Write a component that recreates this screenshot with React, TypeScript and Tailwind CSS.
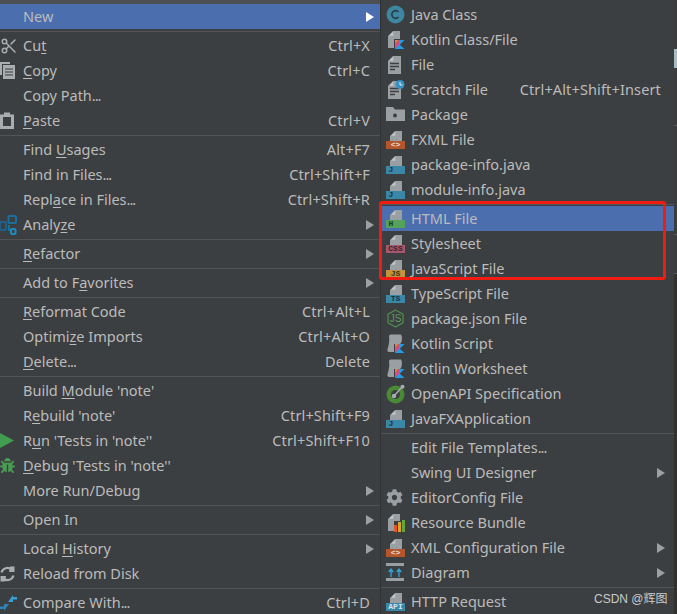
import type { ReactNode } from "react"
import { FaBug, FaCog } from "react-icons/fa"
import { Scissors } from "lucide-react"

type MenuEntry = {
  label: string
  shortcut?: string
  arrow?: boolean
  active?: boolean
  icon?: ReactNode
}

const PAGE = "#9a9fa3"

function Page() {
  return (
    <>
      <path d="M4 6 L9 1 H16 V11 H4 Z" fill={PAGE} />
      <path d="M5 5.8 L9.3 1.5 V5.8 Z" fill="#c3c6c8" />
    </>
  )
}

function BadgeIcon({ color, label, ink }: { color: string; label: string; ink: string }) {
  return (
    <svg width="19" height="19" viewBox="0 0 19 19">
      <Page />
      <rect x="0" y="11" width="19" height="8" fill={color} />
      <text
        x={label.length > 1 ? 9.5 : 5}
        y="17.2"
        textAnchor="middle"
        fontSize="8"
        fontWeight="700"
        fontFamily="Liberation Mono, monospace"
        fill={ink}
      >
        {label}
      </text>
    </svg>
  )
}

function KotlinMark() {
  return (
    <>
      <path d="M13 10 H18.5 L13 15.5 Z" fill="#1e9fe6" />
      <path d="M9 10 H13 L9 14.5 Z" fill="#ef7d3a" />
      <path d="M9 14.5 L13 10 L14 14.5 L9 19 Z" fill="#d64d87" />
      <path d="M9 19 L13.5 14.5 L18.5 19 Z" fill="#1e9fe6" />
    </>
  )
}

function KotlinFile({ blob }: { blob?: boolean }) {
  return (
    <svg width="19" height="19" viewBox="0 0 19 19">
      {blob ? (
        <path d="M3 2 Q3 0.5 5 0.5 H15 Q17 4 15 9 L14 10 H8 V18 H3 Q1 18 1.5 15 Q4 8 3 2 Z" fill={PAGE} />
      ) : (
        <>
          <path d="M2 6 L7 1 H14 V9 H8 V18 H2 Z" fill={PAGE} />
          <path d="M3 5.8 L7.3 1.5 V5.8 Z" fill="#c3c6c8" />
        </>
      )}
      <KotlinMark />
    </svg>
  )
}

function TextFile({ clock }: { clock?: boolean }) {
  return (
    <svg width="19" height="19" viewBox="0 0 19 19">
      <path d="M2 6 L7 1 H15 V19 H2 Z" fill={PAGE} />
      <path d="M3 5.8 L7.3 1.5 V5.8 Z" fill="#c3c6c8" />
      <path d="M4 8.5 H13 M4 11.5 H13 M4 14.5 H9" stroke="#3c3f41" strokeWidth="1.3" />
      {clock && (
        <>
          <circle cx="14" cy="4.5" r="4.5" fill="#3592c4" />
          <path d="M14 2 V5 H16.5" stroke="#e6f0f5" strokeWidth="1" fill="none" />
        </>
      )}
    </svg>
  )
}

function JavaClass() {
  return (
    <svg width="19" height="19" viewBox="0 0 19 19">
      <circle cx="9.5" cy="9.5" r="9" fill="#3d87a3" />
      <path d="M12.5 7 A3.8 3.8 0 1 0 12.5 12" stroke="#2b3d45" strokeWidth="1.7" fill="none" />
    </svg>
  )
}

function PackageIcon() {
  return (
    <svg width="19" height="19" viewBox="0 0 19 19">
      <path d="M0 2 H7 L9 4.5 H19 V16 H0 Z" fill={PAGE} />
      <circle cx="9" cy="10.5" r="2" fill="#3c3f41" />
    </svg>
  )
}

function PackageJson() {
  return (
    <svg width="19" height="19" viewBox="0 0 19 19">
      <path d="M9.5 1 L17 5.2 V13.8 L9.5 18 L2 13.8 V5.2 Z" fill="none" stroke="#4f8a4f" strokeWidth="1.3" />
      <text x="9.5" y="13" textAnchor="middle" fontSize="10" fontFamily="Liberation Sans, sans-serif" fill="#5f9a5f">
        JS
      </text>
    </svg>
  )
}

function OpenApi() {
  return (
    <svg width="20" height="20" viewBox="0 0 20 20">
      <circle cx="9.5" cy="10.5" r="9" fill="#4b8a35" />
      <circle cx="9.5" cy="10.5" r="4.5" fill="#3c3f41" />
      <path d="M8 12 L16 3" stroke="#a9adb0" strokeWidth="1.4" />
      <circle cx="8" cy="12" r="2.2" fill="#a9adb0" />
      <circle cx="16.5" cy="2.8" r="2" fill="#a9adb0" />
    </svg>
  )
}

function ResourceBundle() {
  return (
    <svg width="19" height="19" viewBox="0 0 19 19">
      <path d="M2 6 L7 1 H14 V8 H8 V18 H2 Z" fill={PAGE} />
      <path d="M3 5.8 L7.3 1.5 V5.8 Z" fill="#c3c6c8" />
      <rect x="8" y="12" width="3" height="7" fill="#e0562a" />
      <rect x="12" y="9" width="3" height="10" fill="#e0a32a" />
      <rect x="16" y="7" width="3" height="12" fill="#62a73b" />
    </svg>
  )
}

function DiagramIcon() {
  return (
    <svg width="19" height="19" viewBox="0 0 19 19">
      <rect x="0" y="0" width="18" height="3" fill={PAGE} />
      <rect x="0" y="15" width="18" height="3" fill={PAGE} />
      <path d="M5 14 V7 M2.8 9 L5 6 L7.2 9 M13 14 V7 M10.8 9 L13 6 L15.2 9" stroke="#35a6d8" strokeWidth="1.3" fill="none" />
    </svg>
  )
}

function CopyIcon() {
  return (
    <svg width="15" height="17" viewBox="0 0 15 17">
      <path d="M0 0 H10 V2 H2 V13 H0 Z" fill="#a9adb0" />
      <rect x="3" y="3" width="12" height="14" fill="#a9adb0" />
      <path d="M5 7 H13 M5 10 H13 M5 13 H13" stroke="#3c3f41" strokeWidth="1.2" />
    </svg>
  )
}

function PasteIcon() {
  return (
    <svg width="14" height="17" viewBox="0 0 14 17">
      <path d="M0 2.5 H4 V0.5 H10 V2.5 H14 V17 H0 Z" fill="#a9adb0" />
      <rect x="3" y="5" width="8" height="9" fill="#3c3f41" />
    </svg>
  )
}

function AnalyzeIcon() {
  return (
    <svg width="17" height="20" viewBox="0 0 17 20">
      <rect x="8.5" y="1" width="7.5" height="7" rx="1" fill="none" stroke="#1b6f9e" strokeWidth="2" />
      <rect x="0" y="7" width="6" height="8" rx="1" fill="none" stroke="#1f5f88" strokeWidth="2" />
      <rect x="8" y="10" width="2" height="6" fill="#1b6f9e" />
      <rect x="11" y="14" width="4.5" height="5" rx="1" fill="none" stroke="#1b8cc0" strokeWidth="2" />
    </svg>
  )
}

function RunIcon() {
  return (
    <svg width="14" height="15" viewBox="0 0 14 15">
      <path d="M0 0 L14 7.5 L0 15 Z" fill="#3f9e50" />
    </svg>
  )
}

function ReloadIcon() {
  return (
    <svg width="15" height="16" viewBox="0 0 15 16">
      <path d="M1.5 6.5 A6.2 6.2 0 0 1 12.5 4.5" stroke="#a9adb0" strokeWidth="2.2" fill="none" />
      <path d="M10 0.5 H14.5 V6 H9 Z" fill="#a9adb0" />
      <path d="M13.5 9.5 A6.2 6.2 0 0 1 2.5 11.5" stroke="#a9adb0" strokeWidth="2.2" fill="none" />
      <path d="M5 15.5 H0.5 V10 H6 Z" fill="#a9adb0" />
    </svg>
  )
}

function CompareIcon() {
  return (
    <svg width="17" height="18" viewBox="0 0 17 18">
      <path d="M8 8 L13 1 V8 Z" fill="#389fd6" />
      <rect x="13" y="3" width="4" height="2.5" fill="#389fd6" />
      <path d="M9 10 L4 17 V10 Z" fill="#2f84b5" />
      <rect x="0" y="12.5" width="4" height="2.5" fill="#2f84b5" />
    </svg>
  )
}

const leftSections: MenuEntry[][] = [
  [{ label: "New", arrow: true, active: true }],
  [
    { label: "Cu&t", shortcut: "Ctrl+X", icon: <Scissors size={18} strokeWidth={2} color="#a9adb0" className="rotate-180 -scale-x-100" /> },
    { label: "&Copy", shortcut: "Ctrl+C", icon: <CopyIcon /> },
    { label: "Copy Path..." },
    { label: "&Paste", shortcut: "Ctrl+V", icon: <PasteIcon /> },
  ],
  [
    { label: "Find &Usages", shortcut: "Alt+F7" },
    { label: "Find in Files...", shortcut: "Ctrl+Shift+F" },
    { label: "Repl&ace in Files...", shortcut: "Ctrl+Shift+R" },
    { label: "Analy&ze", arrow: true, icon: <AnalyzeIcon /> },
  ],
  [{ label: "&Refactor", arrow: true }],
  [{ label: "Add to F&avorites", arrow: true }],
  [
    { label: "&Reformat Code", shortcut: "Ctrl+Alt+L" },
    { label: "Optimi&ze Imports", shortcut: "Ctrl+Alt+O" },
    { label: "&Delete...", shortcut: "Delete" },
  ],
  [
    { label: "Build &Module 'note'" },
    { label: "R&ebuild 'note'", shortcut: "Ctrl+Shift+F9" },
    { label: "R&un 'Tests in 'note''", shortcut: "Ctrl+Shift+F10", icon: <RunIcon /> },
    { label: "&Debug 'Tests in 'note''", icon: <FaBug size={15} color="#499c54" /> },
    { label: "More Run/Debug", arrow: true },
  ],
  [{ label: "Open In", arrow: true }],
  [
    { label: "Local &History", arrow: true },
    { label: "Reload from Disk", icon: <ReloadIcon /> },
  ],
  [{ label: "Compare With...", shortcut: "Ctrl+D", icon: <CompareIcon /> }],
]

const XML = "#b5562a"
const BLUE = "#3a87a8"

const rightSections: MenuEntry[][] = [
  [
    { label: "Java Class", icon: <JavaClass /> },
    { label: "Kotlin Class/File", icon: <KotlinFile /> },
    { label: "File", icon: <TextFile /> },
    { label: "Scratch File", shortcut: "Ctrl+Alt+Shift+Insert", icon: <TextFile clock /> },
    { label: "Package", icon: <PackageIcon /> },
    { label: "FXML File", icon: <BadgeIcon color={XML} label="<>" ink="#e6d8d0" /> },
    { label: "package-info.java", icon: <BadgeIcon color={BLUE} label="J" ink="#21323a" /> },
    { label: "module-info.java", icon: <BadgeIcon color={BLUE} label="J" ink="#21323a" /> },
  ],
  [
    { label: "HTML File", active: true, icon: <BadgeIcon color="#55a35a" label="H" ink="#1f3d22" /> },
    { label: "Stylesheet", icon: <BadgeIcon color="#a8586c" label="CSS" ink="#3c2229" /> },
    { label: "JavaScript File", icon: <BadgeIcon color="#c4923a" label="JS" ink="#3e2f14" /> },
    { label: "TypeScript File", icon: <BadgeIcon color={BLUE} label="TS" ink="#16303b" /> },
    { label: "package.json File", icon: <PackageJson /> },
    { label: "Kotlin Script", icon: <KotlinFile blob /> },
    { label: "Kotlin Worksheet", icon: <KotlinFile blob /> },
    { label: "OpenAPI Specification", icon: <OpenApi /> },
    { label: "JavaFXApplication", icon: <BadgeIcon color={BLUE} label="J" ink="#21323a" /> },
  ],
  [
    { label: "Edit File Templates..." },
    { label: "Swing UI Designer", arrow: true },
    { label: "EditorConfig File", icon: <FaCog size={17} color={PAGE} /> },
    { label: "Resource Bundle", icon: <ResourceBundle /> },
    { label: "XML Configuration File", arrow: true, icon: <BadgeIcon color={XML} label="<>" ink="#e6d8d0" /> },
    { label: "Diagram", arrow: true, icon: <DiagramIcon /> },
  ],
  [{ label: "HTTP Request", icon: <BadgeIcon color={BLUE} label="API" ink="#d5e6ee" /> }],
]

// "&" marks the mnemonic letter, like the Swing menu labels do
function Label({ text }: { text: string }) {
  const dots = text.endsWith("...")
  const body = dots ? text.slice(0, -3) : text
  const at = body.indexOf("&")
  return (
    <span>
      {at < 0 ? (
        body
      ) : (
        <>
          {body.slice(0, at)}
          <span className="underline underline-offset-2">{body[at + 1]}</span>
          {body.slice(at + 2)}
        </>
      )}
      {dots && <span className="tracking-[-1px]">...</span>}
    </span>
  )
}

function Arrow({ active }: { active?: boolean }) {
  return (
    <svg width="8" height="10" viewBox="0 0 8 10">
      <path d="M0 0 L8 5 L0 10 Z" fill={active ? "#ffffff" : "#9da0a2"} />
    </svg>
  )
}

function Row({ entry, side }: { entry: MenuEntry; side: "left" | "right" }) {
  return (
    <div
      className={`flex h-[25px] items-center ${side === "left" ? "pr-[10px]" : "pr-[13px]"} ${
        entry.active ? "bg-[#4b6eaf]" : ""
      }`}
    >
      <div
        className={
          side === "left"
            ? "flex w-[23px] shrink-0 items-center"
            : "flex w-[30px] shrink-0 items-center pl-[5px]"
        }
      >
        {entry.icon}
      </div>
      <Label text={entry.label} />
      {entry.shortcut && <span className="ml-auto tracking-[0.14px]">{entry.shortcut}</span>}
      {entry.arrow && (
        <span className="ml-auto flex w-[8px] translate-x-[4px]">
          <Arrow active={entry.active} />
        </span>
      )}
    </div>
  )
}

function Menu({ sections, side }: { sections: MenuEntry[][]; side: "left" | "right" }) {
  return (
    <>
      {sections.map((rows, i) => (
        <div key={i}>
          {i > 0 && (
            <div className="flex h-[4px] items-center">
              <div className="h-px w-full bg-[#515355]" />
            </div>
          )}
          {rows.map((entry) => (
            <Row key={entry.label} entry={entry} side={side} />
          ))}
        </div>
      ))}
    </>
  )
}

export default function App() {
  return (
    <div className="relative flex h-[614px] w-[677px] overflow-hidden bg-[#3c3f41] font-['Noto_Sans',sans-serif] text-[14.5px] text-[#bbbbbb]">
      <div className="w-[380px] shrink-0">
        <div className="h-[4px] bg-[#4d5052]" />
        <Menu sections={leftSections} side="left" />
      </div>
      <div className="w-[294px] shrink-0 border-l border-[#2f3133] pt-[2px]">
        <Menu sections={rightSections} side="right" />
      </div>
      {/* sliver of the editor showing behind the popup */}
      <div className="flex-1 bg-[#3a3c3e] pt-[49px]">
        <div className="h-[19px] bg-[#a9bcc4]" />
        <div className="mt-[57px] h-px bg-[#5a5c5e]" />
        <div className="mt-[108px] h-[40px] border-y border-[#5a5c5e]" />
        <div className="h-[340px] bg-[#35322e]" />
      </div>

      <div className="absolute top-[201px] left-[379px] h-[79px] w-[287px] rounded-[3px] border-[3px] border-[#f01c12]" />
      <div className="absolute top-[590px] left-[594px] font-['Liberation_Sans','Noto_Sans_CJK_SC',sans-serif] text-[12px] text-[#c9cacb]">
        CSDN @辉图
      </div>
    </div>
  )
}
